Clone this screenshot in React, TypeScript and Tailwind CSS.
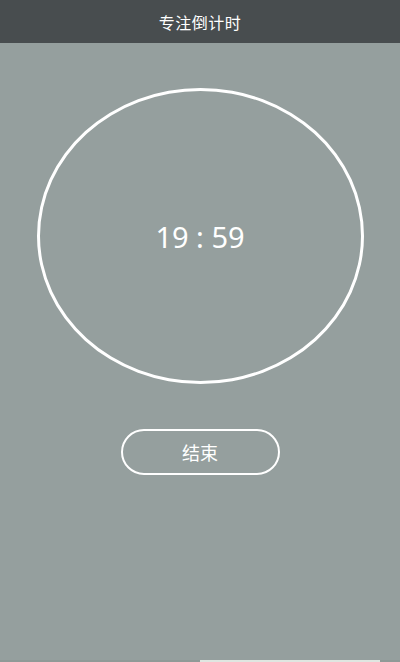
import React from "react";

export default function App() {
  const font = { fontFamily: '"Noto Sans", "Noto Sans CJK SC", sans-serif' };
  return (
    <div className="w-[400px] h-[662px] flex flex-col bg-[#959f9e]" style={font}>
      <div className="h-[43px] shrink-0 bg-[#484d4f] flex items-center justify-center">
        <span className="text-white text-[16px] leading-none tracking-[0.5px]" style={{ fontFamily: '"Noto Sans CJK SC", sans-serif' }}>
          专注倒计时
        </span>
      </div>
      <div className="flex-1 flex flex-col items-center pt-[45px]">
        <div className="w-[327px] h-[296px] rounded-[50%] border-[3.5px] border-white flex items-center justify-center">
          <span className="text-white text-[29px] leading-none mt-[1px]" style={{ fontFamily: '"Noto Sans", sans-serif' }}>
            19 : 59
          </span>
        </div>
        <button className="mt-[45px] w-[159px] h-[46px] rounded-full border-2 border-white flex items-center justify-center">
          <span className="text-white text-[18px] leading-none" style={{ fontFamily: '"Noto Sans CJK SC", sans-serif' }}>
            结束
          </span>
        </button>
      </div>
      <div className="h-[2px] shrink-0 flex">
        <div className="w-[200px] bg-[#8f9a97]" />
        <div className="w-[180px] bg-[#dfe6e1]" />
        <div className="flex-1 bg-[#8f9a97]" />
      </div>
    </div>
  );
}
